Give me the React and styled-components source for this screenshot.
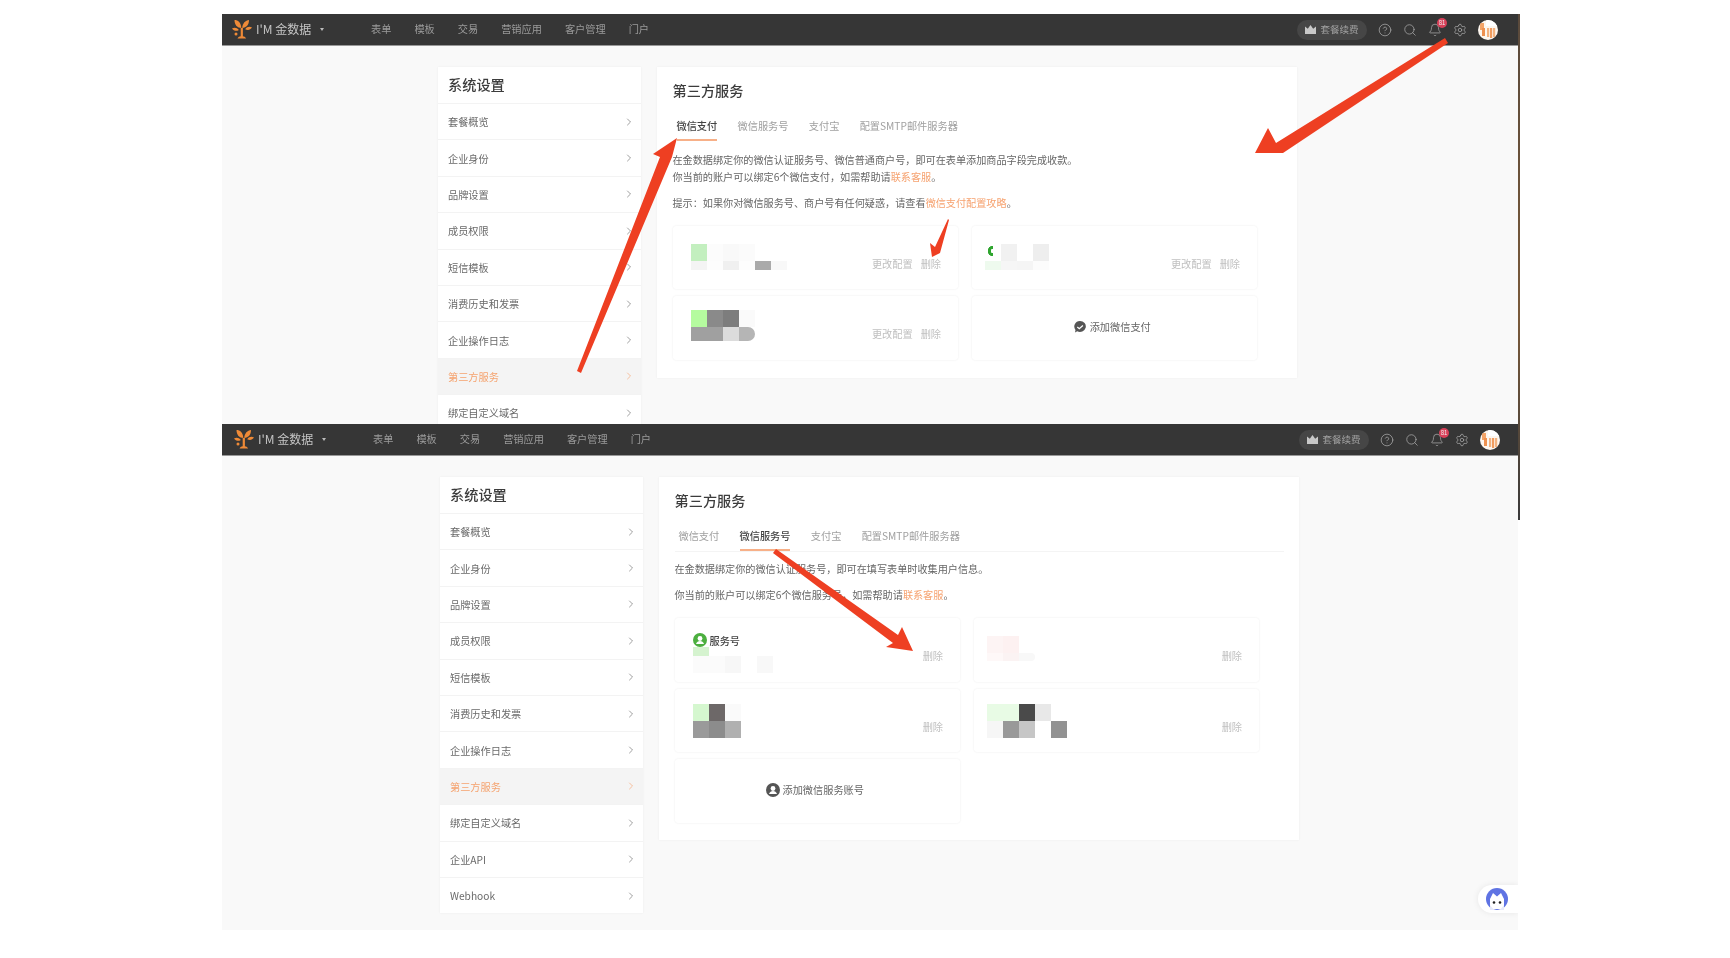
import React from 'react';
import styled, { createGlobalStyle } from 'styled-components';
import { ChevronRight, CircleHelp, Search, Bell, Settings } from 'lucide-react';

const font = `'Noto Sans CJK SC', 'Liberation Sans', sans-serif`;

const menuItems = ['套餐概览', '企业身份', '品牌设置', '成员权限', '短信模板', '消费历史和发票', '企业操作日志', '第三方服务', '绑定自定义域名', '企业API', 'Webhook'];
const navItems = ['表单', '模板', '交易', '营销应用', '客户管理', '门户'];
const tabs = ['微信支付', '微信服务号', '支付宝', '配置SMTP邮件服务器'];

const Global = createGlobalStyle`
  html, body { margin: 0; padding: 0; background: #fff; }
  body { font-family: ${font}; }
`;

const Page = styled.div`
  position: relative;
  width: 1730px;
  height: 958px;
  padding: 14px 0 0 222px;
  box-sizing: border-box;
  overflow: hidden;
  background: #fff;
`;

const Shot = styled.section`
  position: relative;
  width: ${({ $width }) => $width}px;
  height: ${({ $height }) => $height}px;
  overflow: hidden;
  background: #f9f9f9;
  filter: blur(0.4px);
`;

const NavBar = styled.header`
  display: flex;
  align-items: center;
  height: 32px;
  box-sizing: border-box;
  padding: 0 ${({ $right }) => $right}px 0 ${({ $left }) => $left}px;
  background: #363636;
  border-bottom: 1px solid #999;
`;

const Brand = styled.div`
  display: flex;
  align-items: center;
  width: 139px;
  flex-shrink: 0;
  color: #c4c4c4;
  font-size: 12px;
`;

const BrandName = styled.span`
  margin: 0 0 2px 4px;
`;

const Caret = styled.span`
  width: 0;
  height: 0;
  margin-left: 9px;
  border-left: 2.5px solid transparent;
  border-right: 2.5px solid transparent;
  border-top: 3px solid #bbb;
`;

const NavMenu = styled.nav`
  display: flex;
  gap: 23px;
  flex: 1;
  padding-bottom: 2px;
`;

const NavLink = styled.span`
  color: #9b9b9b;
  font-size: 10.2px;
`;

const NavTools = styled.div`
  display: flex;
  align-items: center;
  gap: 11px;
  color: #a8a8a8;
`;

const RenewPill = styled.div`
  display: flex;
  align-items: center;
  justify-content: center;
  gap: 4px;
  width: 70px;
  height: 20px;
  padding-bottom: 1px;
  box-sizing: border-box;
  border-radius: 10px;
  background: #464646;
  color: #a0a0a0;
  font-size: 9.5px;
`;

const BellWrap = styled.span`
  position: relative;
  display: flex;
`;

const Badge = styled.span`
  position: absolute;
  top: -5px;
  left: 9px;
  width: 10px;
  height: 10px;
  border-radius: 50%;
  background: #d9415a;
  color: #eee;
  font-size: 6px;
  line-height: 10px;
  text-align: center;
`;

const Main = styled.main`
  display: flex;
  align-items: flex-start;
  gap: 15.5px;
  padding: 21px 0 0 ${({ $left }) => $left}px;
`;

const Sidebar = styled.aside`
  width: 203px;
  flex-shrink: 0;
  background: #fff;
  box-shadow: 0 0 2px rgba(0, 0, 0, 0.06);
`;

const SideTitle = styled.h2`
  margin: 0;
  height: 36px;
  padding-left: 10px;
  color: #3c3c3c;
  font-size: 14.2px;
  font-weight: 500;
  line-height: 34px;
`;

const SideRow = styled.div`
  display: flex;
  align-items: center;
  justify-content: space-between;
  height: 36.4px;
  box-sizing: border-box;
  padding: 0 6px 0 10px;
  border-top: 1px solid #f3f3f3;
  background: ${({ $active }) => ($active ? '#f4f4f4' : '#fff')};
  color: ${({ $active }) => ($active ? '#f5a36f' : '#6a6a6a')};
  font-size: 10.2px;
`;

const Panel = styled.div`
  width: 640px;
  flex-shrink: 0;
  box-sizing: border-box;
  padding: 13px 16px ${({ $bottom }) => $bottom}px 16px;
  background: #fff;
  box-shadow: 0 0 2px rgba(0, 0, 0, 0.06);
`;

const PanelTitle = styled.h3`
  margin: 0;
  color: #3c3c3c;
  font-size: 14.2px;
  font-weight: 500;
  line-height: 20px;
`;

const TabBar = styled.div`
  display: flex;
  gap: 20.3px;
  width: 609px;
  margin-top: 15px;
  padding-left: 4px;
  box-sizing: border-box;
  border-bottom: ${({ $line }) => ($line ? '1px solid #f4f4f4' : 'none')};
`;

const Tab = styled.div`
  height: 26px;
  box-sizing: border-box;
  padding-bottom: 2px;
  border-bottom: 2px solid ${({ $active }) => ($active ? '#f7b088' : 'transparent')};
  color: ${({ $active }) => ($active ? '#444' : '#a0a0a0')};
  font-size: 10.2px;
  font-weight: ${({ $active }) => ($active ? 500 : 400)};
  line-height: 22px;
`;

const Intro = styled.div`
  padding: ${({ $top }) => $top}px 0 ${({ $bottom }) => $bottom}px;
`;

const Para = styled.p`
  margin: ${({ $gap }) => $gap || 0}px 0 0;
  color: #666;
  font-size: 10.15px;
  line-height: ${({ $lh }) => $lh || 16.5}px;
`;

const Link = styled.span`
  color: #f6a26f;
`;

const CardGrid = styled.div`
  display: grid;
  grid-template-columns: 285.5px 285.5px;
  grid-auto-rows: 63.5px;
  gap: 7px 13.5px;
`;

const Card = styled.div`
  display: flex;
  justify-content: space-between;
  box-sizing: border-box;
  padding: 18px 17px 0 18px;
  border-radius: 3px;
  box-shadow: 0 0 2px rgba(0, 0, 0, 0.09);
`;

const Actions = styled.div`
  display: flex;
  gap: 8px;
  height: 20px;
  margin-top: 10px;
  color: #c0c0c0;
  font-size: 10.2px;
  line-height: 20px;
`;

const AddCard = styled(Card)`
  align-items: center;
  justify-content: center;
  gap: 3px;
  padding: 0 5px 2px 0;
  color: #666;
  font-size: 10.2px;
`;

const AccountLabel = styled.div`
  display: flex;
  align-items: center;
  gap: 3px;
  margin-top: -3px;
  height: 14px;
  color: #444;
  font-size: 10.2px;
  font-weight: 500;
`;

const Mosaic = styled.div`
  display: grid;
  grid-template-columns: repeat(${({ $cols }) => $cols}, 16px);
  grid-template-rows: ${({ $rows }) => $rows};
  margin: ${({ $top }) => $top || 0}px 0 0 ${({ $left }) => $left || 0}px;
  align-self: flex-start;
`;

const Cell = styled.div`
  background: ${({ $c }) => $c};
  border-radius: ${({ $round }) => ($round ? '0 7px 7px 0' : '0')};
`;

const ArcCell = styled.div`
  background:
    linear-gradient(#fff, #fff) 8px 0 / 8px 17px no-repeat,
    radial-gradient(circle at 8px 7px, transparent 0 2px, #2fa52f 2.500px 5px, transparent 5.500px);
`;

const CatPill = styled.div`
  position: absolute;
  top: 461px;
  right: 0;
  display: flex;
  align-items: center;
  width: 40px;
  height: 28px;
  padding-left: 8px;
  box-sizing: border-box;
  border-radius: 14px 0 0 14px;
  background: #fff;
  box-shadow: 0 0 6px rgba(0, 0, 0, 0.08);
`;

const EdgeLine = styled.div`
  position: absolute;
  top: 14px;
  left: 1518px;
  width: 2px;
  height: 506px;
  background: linear-gradient(#5a4a3c, #7a5a3a 60%, #3a3a3a);
`;

const Arrows = styled.svg`
  position: absolute;
  top: 0;
  left: 0;
  pointer-events: none;
`;

const Logo = () => (
  <svg width="20" height="19" viewBox="0 0 20 19">
    <g fill="#ef8a37">
      <path d="M2.500 0c3.500 0 6.500 2.500 6.800 8C5.500 8 2.500 5 2.500 0z" />
      <path d="M17 0c-3.500.5-6.500 3-6.800 8C14.500 7.600 17 5 17 0z" />
      <path d="M0 8.500c2.500-1.500 5-1 6.800 1.500-2.300 1.500-5 1-6.800-1.500z" />
      <path d="M20 7.500c-2.500-1.200-5-.7-6.800 1.700 2.300 1.300 5 1 6.800-1.700z" />
      <circle cx="4" cy="14" r="1.500" />
      <path d="M8.700 8h2.200v8.200c1.200.2 2.400.7 3.200 2.300H5.500c.8-1.600 2-2.100 3.200-2.300z" />
    </g>
  </svg>
);

const CrownIcon = () => (
  <svg width="11" height="9" viewBox="0 0 11 9">
    <path d="M0 1.500l2.800 2.300L5.500 0l2.700 3.800L11 1.500V9H0z" fill="#c8c8c8" />
  </svg>
);

const Avatar = () => (
  <svg width="20" height="20" viewBox="0 0 20 20">
    <defs>
      <clipPath id="avatar-clip"><circle cx="10" cy="10" r="10" /></clipPath>
    </defs>
    <g clipPath="url(#avatar-clip)">
      <rect width="20" height="20" fill="#fdf6ef" />
      <rect x="2" y="3" width="4" height="7" fill="#f3a468" />
      <rect x="4" y="8" width="3" height="8" fill="#ee9150" />
      <rect x="9" y="8" width="2.200" height="9" fill="#f3b27f" />
      <rect x="12" y="8" width="2.200" height="10" fill="#f09c5f" />
      <rect x="15" y="8" width="2.200" height="9" fill="#f3b27f" />
      <rect x="8" y="0" width="12" height="6" fill="#fff" />
    </g>
  </svg>
);

const PayIcon = () => (
  <svg width="14" height="14" viewBox="0 0 14 14">
    <path d="M7 1a5.800 5.500 0 1 1-2.800 10.300L2 12.500l.5-2.600A5.500 5.500 0 0 1 7 1z" fill="#555" />
    <path d="M4.300 7l2 1.700 3.600-3.200" stroke="#fff" strokeWidth="1.300" fill="none" />
  </svg>
);

const PersonIcon = ({ color }) => (
  <svg width="14" height="14" viewBox="0 0 14 14">
    <circle cx="7" cy="7" r="7" fill={color} />
    <circle cx="7" cy="5.500" r="2.400" fill="#fff" />
    <path d="M3 11c.6-2 2.200-3 4-3s3.400 1 4 3z" fill="#fff" />
  </svg>
);

const CatIcon = () => (
  <svg width="22" height="22" viewBox="0 0 22 22">
    <circle cx="11" cy="11" r="11" fill="#5f73e3" />
    <path d="M4 21V11l3-6 4 3.500L15 5l3 6v10z" fill="#fff" />
    <path d="M4 17c2 3 4 5 7 5s5-2 7-5v5H4z" fill="#e6e9fb" />
    <circle cx="8" cy="14.500" r="1.300" fill="#222" />
    <circle cx="14" cy="14.500" r="1.300" fill="#222" />
  </svg>
);

const Nav = ({ left, right }) => (
  <NavBar $left={left} $right={right}>
    <Brand>
      <Logo />
      <BrandName>I'M 金数据</BrandName>
      <Caret />
    </Brand>
    <NavMenu>
      {navItems.map((item) => (
        <NavLink key={item}>{item}</NavLink>
      ))}
    </NavMenu>
    <NavTools>
      <RenewPill>
        <CrownIcon />
        套餐续费
      </RenewPill>
      <CircleHelp size={14} strokeWidth={1.300} />
      <Search size={14} strokeWidth={1.300} />
      <BellWrap>
        <Bell size={14} strokeWidth={1.300} />
        <Badge>81</Badge>
      </BellWrap>
      <Settings size={14} strokeWidth={1.300} />
      <Avatar />
    </NavTools>
  </NavBar>
);

const Side = ({ count }) => (
  <Sidebar>
    <SideTitle>系统设置</SideTitle>
    {menuItems.slice(0, count).map((item) => (
      <SideRow key={item} $active={item === '第三方服务'}>
        {item}
        <ChevronRight size={12} strokeWidth={1.300} />
      </SideRow>
    ))}
  </Sidebar>
);

const Blocks = ({ cols, rows, cells, left, top }) => (
  <Mosaic $cols={cols} $rows={rows} $left={left} $top={top}>
    {cells.map((c, i) =>
      c === 'arc' ? <ArcCell key={i} /> : <Cell key={i} $c={c.replace('*', '')} $round={c.endsWith('*')} />
    )}
  </Mosaic>
);

const Tabs = ({ active, line }) => (
  <TabBar $line={line}>
    {tabs.map((t, i) => (
      <Tab key={t} $active={i === active}>{t}</Tab>
    ))}
  </TabBar>
);

export default function App() {
  return (
    <Page>
      <Global />
      <Shot $width={1297} $height={410}>
        <Nav left={10} right={21} />
        <Main $left={216}>
          <Side count={9} />
          <Panel $bottom={18}>
            <PanelTitle>第三方服务</PanelTitle>
            <Tabs active={0} />
            <Intro $top={11} $bottom={14}>
              <Para>在金数据绑定你的微信认证服务号、微信普通商户号，即可在表单添加商品字段完成收款。</Para>
              <Para>你当前的账户可以绑定6个微信支付，如需帮助请<Link>联系客服</Link>。</Para>
              <Para $gap={10}>提示：如果你对微信服务号、商户号有任何疑惑，请查看<Link>微信支付配置攻略</Link>。</Para>
            </Intro>
            <CardGrid>
              <Card>
                <Blocks cols={6} rows="17px 9px" cells={['#c3efbf', '#fcfcfc', '#f9f9f9', '#fbfbfb', '#fff', '#fff', '#f4f4f4', '#fdfdfd', '#f0f0f0', '#fdfdfd', '#aaa', '#f8f8f8']} />
                <Actions><span>更改配置</span><span>删除</span></Actions>
              </Card>
              <Card>
                <Blocks left={-5} cols={4} rows="17px 9px" cells={['arc', '#f1f1f1', '#fff', '#eee', '#eefaee', '#f6f6f6', '#f5f5f5', '#fcfcfc']} />
                <Actions><span>更改配置</span><span>删除</span></Actions>
              </Card>
              <Card>
                <Blocks top={-4} cols={4} rows="17px 14px" cells={['#b5fb9f', '#8a8a8a', '#7d7d7d', '#fafafa', '#a0a0a0', '#a0a0a0', '#dcdcdc', '#b5b5b5*']} />
                <Actions><span>更改配置</span><span>删除</span></Actions>
              </Card>
              <AddCard><PayIcon />添加微信支付</AddCard>
            </CardGrid>
          </Panel>
        </Main>
      </Shot>
      <Shot $width={1296} $height={506}>
        <Nav left={12} right={18} />
        <Main $left={218}>
          <Side count={11} />
          <Panel $bottom={17}>
            <PanelTitle>第三方服务</PanelTitle>
            <Tabs active={1} line />
            <Intro $top={8} $bottom={15}>
              <Para $lh={17}>在金数据绑定你的微信认证服务号，即可在填写表单时收集用户信息。</Para>
              <Para $lh={17} $gap={9}>你当前的账户可以绑定6个微信服务号，如需帮助请<Link>联系客服</Link>。</Para>
            </Intro>
            <CardGrid>
              <Card>
                <div>
                  <AccountLabel><PersonIcon color="#4caf3f" />服务号</AccountLabel>
                  <Blocks cols={6} rows="9px 17px" cells={['#d5f3cf', '#fff', '#fff', '#fff', '#fff', '#fff', '#fbfbfb', '#fbfbfb', '#f7f7f7', '#fff', '#f8f8f8', '#fff']} />
                </div>
                <Actions><span>删除</span></Actions>
              </Card>
              <Card>
                <Blocks left={-5} cols={3} rows="17px 8px" cells={['#fdf4f4', '#fdf1f1', '#fff', '#fef8f8', '#fbf3f3', '#f8f8f8*']} />
                <Actions><span>删除</span></Actions>
              </Card>
              <Card>
                <Blocks top={-3} cols={3} rows="17px 17px" cells={['#d5f7cf', '#6d6868', '#fafafa', '#9a9a9a', '#8c8c8c', '#b0b0b0']} />
                <Actions><span>删除</span></Actions>
              </Card>
              <Card>
                <Blocks top={-3} left={-5} cols={5} rows="17px 17px" cells={['#e8fbe5', '#e8fbe5', '#4a4a4a', '#e8e8e8', '#fff', '#f6f6f6', '#999', '#c6c6c6', '#fff', '#929292']} />
                <Actions><span>删除</span></Actions>
              </Card>
              <AddCard><PersonIcon color="#555" />添加微信服务账号</AddCard>
            </CardGrid>
          </Panel>
        </Main>
        <CatPill><CatIcon /></CatPill>
      </Shot>
      <EdgeLine />
      <Arrows width="1730" height="958" viewBox="0 0 1730 958">
        <g fill="#ee3f22">
          <polygon points="1445,38 1448,43 1283,153 1255,153 1268,128 1276,143" />
          <polygon points="677,138 672,157 581,373 577,371 660,157 653,154" />
          <polygon points="948,219 949,220 940,253 932,257 930,243 935,247" />
          <polygon points="776,549 898,635 902,627 913,651 886,647 893,643 773,553" />
        </g>
      </Arrows>
    </Page>
  );
}
